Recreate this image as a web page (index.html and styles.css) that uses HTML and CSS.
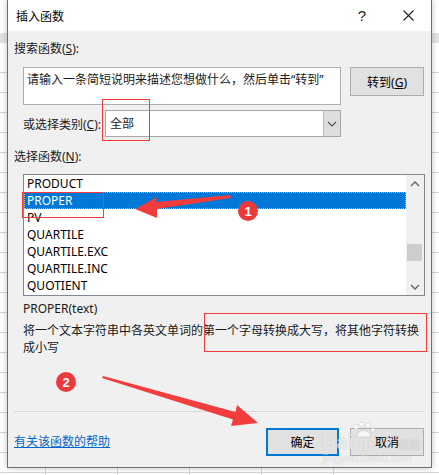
FILE: index.html
```html
<!DOCTYPE html>
<html lang="zh-CN">
<head>
    <meta charset="UTF-8">
    <meta name="viewport" content="width=device-width, initial-scale=1.0">
    <title>插入函数</title>
    <link rel="stylesheet" href="styles.css">
</head>
<body>
    <div class="dialog">
        <div class="titlebar">
            <span class="title">插入函数</span>
            <span class="caption-btn help">?</span>
            <span class="caption-btn">
                <svg width="11" height="11" viewBox="0 0 11 11"><path d="M0.5 0.5 L10.5 10.5 M10.5 0.5 L0.5 10.5" stroke="#222" stroke-width="1.1" fill="none"/></svg>
            </span>
        </div>

        <div class="content">
            <div class="label">搜索函数(<u>S</u>):</div>

            <div class="search-row">
                <div class="search-box">请输入一条简短说明来描述您想做什么，然后单击“转到”</div>
                <button class="btn go-btn">转到(<u>G</u>)</button>
            </div>

            <div class="category-row">
                <span class="category-label">或选择类别(<u>C</u>):</span>
                <div class="select">
                    <span class="select-value">全部</span>
                    <span class="select-drop">
                        <svg width="10" height="6" viewBox="0 0 10 6"><path d="M1 1 L5 5 L9 1" stroke="#555" stroke-width="1.1" fill="none"/></svg>
                    </span>
                </div>
            </div>

            <div class="label list-label">选择函数(<u>N</u>):</div>

            <div class="listbox">
                <ul class="func-list">
                    <li>PRODUCT</li>
                    <li class="selected">PROPER</li>
                    <li>PV</li>
                    <li>QUARTILE</li>
                    <li>QUARTILE.EXC</li>
                    <li>QUARTILE.INC</li>
                    <li>QUOTIENT</li>
                </ul>
                <div class="scrollbar">
                    <span class="scroll-arrow">
                        <svg width="10" height="6" viewBox="0 0 10 6"><path d="M1 5 L5 1 L9 5" stroke="#606060" stroke-width="1.3" fill="none"/></svg>
                    </span>
                    <div class="scroll-track">
                        <div class="scroll-thumb"></div>
                    </div>
                    <span class="scroll-arrow">
                        <svg width="10" height="6" viewBox="0 0 10 6"><path d="M1 1 L5 5 L9 1" stroke="#606060" stroke-width="1.3" fill="none"/></svg>
                    </span>
                </div>
            </div>

            <div class="signature">PROPER(text)</div>
            <p class="description">将一个文本字符串中各英文单词的第一个字母转换成大写，将其他字符转换成小写</p>

            <div class="separator"></div>

            <div class="footer">
                <a class="help-link" href="#">有关该函数的帮助</a>
                <button class="btn ok-btn">确定</button>
                <button class="btn">取消</button>
            </div>
        </div>
    </div>

    <!-- red annotations drawn over the screenshot -->
    <svg class="annotations" width="439" height="475" viewBox="0 0 439 475">
        <rect x="102.5" y="99.5" width="47" height="41" fill="none" stroke="#f03c3c" stroke-width="1"/>
        <rect x="22.5" y="192.5" width="81" height="25" fill="none" stroke="#f03c3c" stroke-width="1"/>
        <rect x="204.5" y="313.5" width="222" height="38" fill="none" stroke="#f03c3c" stroke-width="1"/>

        <polygon points="135,209 157,197 156,202 230,195 231,198 157,209 157,218" fill="#f23d3d"/>
        <circle cx="248" cy="211" r="10" fill="#ec3a3a"/>
        <text x="248" y="215.5" class="badge-num">1</text>

        <polygon points="103,376 235.5,412 237,405 258,423 231,426 233,419.5 102,378" fill="#f23d3d"/>
        <circle cx="66" cy="382" r="10" fill="#ec3a3a"/>
        <text x="66" y="386.5" class="badge-num">2</text>

        <!-- baidu paw mark of the watermark -->
        <g fill="rgba(255,255,255,0.7)" stroke="rgba(140,140,140,0.3)" stroke-width="0.8">
            <ellipse cx="356" cy="427" rx="2.4" ry="3"/>
            <ellipse cx="362" cy="424.5" rx="2.4" ry="2.6"/>
            <ellipse cx="368" cy="425.5" rx="2.4" ry="2.8"/>
            <ellipse cx="373" cy="430" rx="2.2" ry="2.6"/>
            <path d="M357 437 C357 432 361 430 364 430.5 C368 431 371 434 370.5 437 Z"/>
        </g>
    </svg>

    <div class="watermark">
        <div class="wm-logo">
            <span class="wm-bai">Bai</span>
            <span class="wm-du">du</span>
            <span class="wm-jy">经验</span>
        </div>
        <div class="wm-url">jingyan.baidu.com</div>
    </div>
</body>
</html>
```

FILE: styles.css
```css
* {
    margin: 0;
    padding: 0;
    box-sizing: border-box;
}

body {
    width: 439px;
    height: 475px;
    overflow: hidden;
    position: relative;
    font-family: "Noto Sans", "Noto Sans CJK SC", sans-serif;
    font-size: 12px;
    color: #1a1a1a;
    background-color: #fff;
    /* spreadsheet grid behind the dialog */
    background-image:
        linear-gradient(#e3e3e3, #e3e3e3),
        repeating-linear-gradient(90deg, transparent 0 45px, #d4d4d4 45px 46px, transparent 46px 72px),
        repeating-linear-gradient(180deg, transparent 0 19px, #d4d4d4 19px 20px);
    background-size: 100% 10px, 100% 100%, 100% 420px;
    background-position: 0 33px, -72px 0, 0 53px;
    background-repeat: no-repeat;
}

.dialog {
    margin-left: 7px;
    width: 425px;
    background-color: #f0f0f0;
    border: 1px solid #6f6f6f;
    border-top: none;
    box-shadow: 0 0 6px rgba(0, 0, 0, 0.25);
}

.titlebar {
    display: flex;
    align-items: center;
    height: 31px;
    background-color: #fff;
    padding-left: 8px;
}

.title {
    flex: 1;
    color: #000;
}

.caption-btn {
    width: 46px;
    height: 31px;
    display: flex;
    align-items: center;
    justify-content: center;
}

.help {
    font-family: "Liberation Sans", sans-serif;
    font-size: 15px;
    color: #222;
}

.content {
    padding: 9px 7px 11px 6px;
}

.label {
    line-height: 18px;
}

.search-row {
    display: flex;
    align-items: flex-start;
    margin-top: 9px;
    margin-left: 9px;
}

.search-box {
    width: 318px;
    height: 38px;
    background-color: #fff;
    border: 1px solid #abadb3;
    padding: 4px 0 0 3px;
    line-height: 16px;
    white-space: nowrap;
}

.btn {
    font-family: "Noto Sans", "Noto Sans CJK SC", sans-serif;
    font-size: 12px;
    color: #000;
    background-color: #e1e1e1;
    border: 1px solid #adadad;
    height: 28px;
}

.go-btn {
    width: 74px;
    height: 29px;
    margin-left: 9px;
}

.category-row {
    display: flex;
    align-items: center;
    width: 318px;
    margin-top: 5px;
    margin-left: 9px;
}

.category-label {
    flex: 1;
}

.select {
    flex: 0 0 236px;
    height: 27px;
    display: flex;
    border: 1px solid #a6a6a6;
    background-color: #fff;
}

.select-value {
    flex: 1;
    padding-left: 4px;
    line-height: 25px;
}

.select-drop {
    width: 17px;
    display: flex;
    align-items: center;
    justify-content: center;
    background-color: #dddddd;
    border-left: 1px solid #b9b9b9;
}

.list-label {
    margin-top: 11px;
}

.listbox {
    display: flex;
    width: 402px;
    height: 122px;
    margin-top: 8px;
    margin-left: 9px;
    border: 1px solid #828790;
    background-color: #fff;
}

.func-list {
    flex: 1;
    list-style-type: none;
}

.func-list li {
    height: 17px;
    line-height: 17px;
    padding-left: 3px;
    color: #000;
}

.func-list .selected {
    background-color: #0078d7;
    color: #fff;
    outline: 1px dotted #e7b46f;
    outline-offset: -1px;
}

.scrollbar {
    width: 18px;
    display: flex;
    flex-direction: column;
    background-color: #f0f0f0;
}

.scroll-arrow {
    height: 17px;
    display: flex;
    align-items: center;
    justify-content: center;
}

.scroll-track {
    flex: 1;
}

.scroll-thumb {
    width: 15px;
    height: 17px;
    margin: 52px 0 0 1px;
    background-color: #cdcdcd;
}

.signature {
    margin-top: 4px;
    margin-left: 9px;
    line-height: 18px;
}

.description {
    margin-top: 4px;
    margin-left: 9px;
    width: 400px;
    line-height: 17px;
}

.separator {
    height: 1px;
    margin-top: 55px;
    margin-right: -1px;
    background-color: #d9d9d9;
}

.footer {
    display: flex;
    align-items: center;
    margin-top: 16px;
}

.help-link {
    flex: 1;
    color: #0066cc;
    text-decoration: underline;
    margin-bottom: 3px;
}

.ok-btn {
    width: 73px;
    margin-right: 11px;
    border: 2px solid #0078d7;
}

.footer .btn:last-child {
    width: 74px;
}

.annotations {
    position: absolute;
    left: 0;
    top: 0;
    pointer-events: none;
}

.badge-num {
    font-family: "Liberation Sans", sans-serif;
    font-size: 13px;
    font-weight: bold;
    fill: #fff;
    text-anchor: middle;
}

/* faint site watermark in the lower right corner */
.watermark {
    position: absolute;
    left: 322px;
    top: 429px;
    pointer-events: none;
    color: rgba(255, 255, 255, 0.65);
    text-shadow: 0 0 1px rgba(120, 120, 120, 0.4);
}

.wm-logo {
    display: flex;
    align-items: flex-end;
    height: 24px;
    font-family: "Liberation Sans", "Noto Sans CJK SC", sans-serif;
    font-weight: bold;
}

.wm-bai {
    font-size: 20px;
    line-height: 22px;
}

.wm-du {
    font-size: 15px;
    line-height: 17px;
    margin-left: 1px;
}

.wm-jy {
    font-size: 11px;
    line-height: 16px;
    margin-left: 26px;
    color: rgba(255, 255, 255, 0.45);
}

.wm-url {
    font-family: "Liberation Sans", sans-serif;
    font-size: 11px;
    line-height: 11px;
    margin-left: 1px;
}
```
